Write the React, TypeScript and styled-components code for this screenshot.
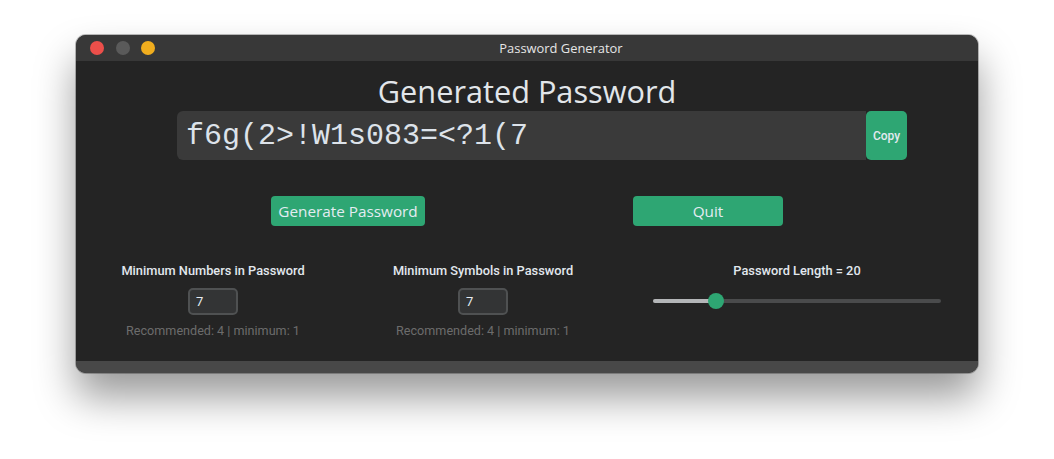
import React from "react";
import styled, { createGlobalStyle } from "styled-components";

const Global = createGlobalStyle`
  html, body { margin: 0; padding: 0; background: #ffffff; }
  body { width: 1054px; height: 459px; overflow: hidden; font-family: "Open Sans", "Noto Sans", sans-serif; }
`;

const Page = styled.div`
  padding: 35px 0 0 76px;
`;

const Window = styled.div`
  width: 902px;
  height: 338px;
  border-radius: 10px;
  overflow: hidden;
  background: #242424;
  display: flex;
  flex-direction: column;
  box-shadow: 0 24px 40px rgba(0, 0, 0, 0.4), 0 0 0 1px rgba(0, 0, 0, 0.25);
`;

const TitleBar = styled.div`
  height: 26px;
  flex: none;
  background: #383838;
  position: relative;
  display: flex;
  align-items: center;
  justify-content: center;
  padding-left: 68px;
  color: #e6e6e6;
  font-size: 12.9px;
  font-family: "Open Sans", "Noto Sans", sans-serif;
`;

const Lights = styled.div`
  position: absolute;
  left: 14px;
  top: 6px;
  display: flex;
  gap: 11.5px;
`;

const Light = styled.span<{ $c: string }>`
  width: 14px;
  height: 14px;
  border-radius: 50%;
  background: ${(p) => p.$c};
`;

const Body = styled.div`
  flex: 1;
  display: flex;
  flex-direction: column;
  padding-top: 11px;
`;

const Heading = styled.div`
  text-align: center;
  color: #e2e6ea;
  font-size: 30.7px;
  line-height: 38px;
  font-family: "Open Sans", "Noto Sans", sans-serif;
`;

const EntryRow = styled.div`
  display: flex;
  margin: 1px 0 0 101px;
  width: 730px;
  height: 49px;
`;

const Entry = styled.div`
  flex: 1;
  background: #3a3a3a;
  border-radius: 6px 0 0 6px;
  display: flex;
  align-items: center;
  padding-left: 9px;
  color: #dde3ea;
  font-family: "Liberation Mono", monospace;
  font-size: 30px;
`;

const CopyButton = styled.div`
  width: 41px;
  background: #2ea673;
  border-radius: 5px;
  display: flex;
  align-items: center;
  justify-content: center;
  color: #e3eaf0;
  font-family: Roboto, sans-serif;
  font-weight: 500;
  font-size: 12px;
`;

const ButtonRow = styled.div`
  display: flex;
  justify-content: center;
  gap: 208px;
  margin-top: 36px;
`;

const Button = styled.div<{ $w: number }>`
  width: ${(p) => p.$w}px;
  height: 30px;
  border-radius: 4px;
  background: #2ea673;
  display: flex;
  align-items: center;
  justify-content: center;
  color: #e4ecf2;
  font-family: "Open Sans", "Noto Sans", sans-serif;
  font-size: 15.3px;
  white-space: nowrap;
`;

const Controls = styled.div`
  display: grid;
  grid-template-columns: 274px 266px 362px;
  margin-top: 37px;
`;

const Column = styled.div`
  display: flex;
  flex-direction: column;
  align-items: center;
`;

const Label = styled.div`
  color: #e2e8ee;
  font-family: Roboto, sans-serif;
  font-weight: 500;
  font-size: 12.8px;
  line-height: 16px;
  white-space: nowrap;
`;

const NumberBox = styled.div`
  margin-top: 9px;
  width: 50px;
  height: 27px;
  box-sizing: border-box;
  border: 2px solid #4f5152;
  border-radius: 5px;
  background: #333435;
  color: #e6ecf2;
  font-family: Roboto, sans-serif;
  font-size: 13px;
  display: flex;
  align-items: center;
  padding-left: 6px;
`;

const Hint = styled.div`
  margin-top: 8px;
  color: #6c6c6c;
  font-family: Roboto, sans-serif;
  font-size: 12.6px;
  line-height: 16px;
  white-space: nowrap;
`;

const Slider = styled.div`
  position: relative;
  margin-top: 14px;
  width: 288px;
  height: 16px;
  display: flex;
  align-items: center;
`;

const Track = styled.div`
  width: 100%;
  height: 4px;
  border-radius: 2px;
  background: #4a4b4c;
  overflow: hidden;
`;

const Fill = styled.div`
  height: 100%;
  background: #b4b6b8;
`;

const Thumb = styled.div`
  position: absolute;
  top: 0;
  width: 16px;
  height: 16px;
  margin-left: -8px;
  border-radius: 50%;
  background: #2ea673;
`;

const BottomBar = styled.div`
  height: 12px;
  flex: none;
  background: #484848;
`;

export default function App() {
  const pos = 63;
  return (
    <Page>
      <Global />
      <Window>
        <TitleBar>
          <Lights>
            <Light $c="#ec4f4a" />
            <Light $c="#5a5a5a" />
            <Light $c="#f0ad1e" />
          </Lights>
          Password Generator
        </TitleBar>
        <Body>
          <Heading>Generated Password</Heading>
          <EntryRow>
            <Entry>f6g(2&gt;!W1s083=&lt;?1(7</Entry>
            <CopyButton>Copy</CopyButton>
          </EntryRow>
          <ButtonRow>
            <Button $w={154}>Generate Password</Button>
            <Button $w={150}>Quit</Button>
          </ButtonRow>
          <Controls>
            <Column>
              <Label>Minimum Numbers in Password</Label>
              <NumberBox>7</NumberBox>
              <Hint>Recommended: 4 | minimum: 1</Hint>
            </Column>
            <Column>
              <Label>Minimum Symbols in Password</Label>
              <NumberBox>7</NumberBox>
              <Hint>Recommended: 4 | minimum: 1</Hint>
            </Column>
            <Column>
              <Label>Password Length = 20</Label>
              <Slider>
                <Track>
                  <Fill style={{ width: `${pos}px` }} />
                </Track>
                <Thumb style={{ left: `${pos}px` }} />
              </Slider>
            </Column>
          </Controls>
        </Body>
        <BottomBar />
      </Window>
    </Page>
  );
}
